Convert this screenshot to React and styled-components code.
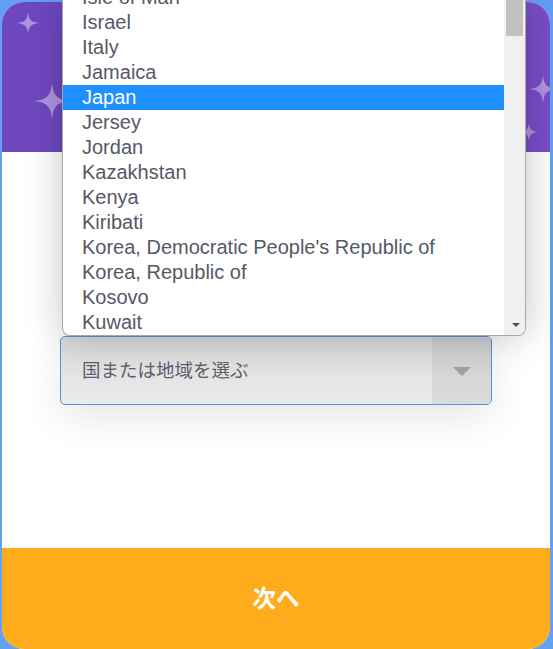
import React from "react";
import styled, { createGlobalStyle } from "styled-components";

const Global = createGlobalStyle`
  html, body { margin: 0; padding: 0; }
  body { background: #62a0f4; overflow: hidden; }
  * { box-sizing: border-box; }
`;

const Page = styled.div`
  position: relative;
  width: 553px;
  height: 649px;
  padding: 2px 3px 0 2px;
`;

const Card = styled.div`
  width: 548px;
  height: 647px;
  border-radius: 22px;
  overflow: hidden;
  background: #fff;
  display: flex;
  flex-direction: column;
`;

const Header = styled.div`
  position: relative;
  height: 150px;
  flex: none;
  background: linear-gradient(90deg, #6e47bf 0%, #7a4dc9 100%);
`;

const Sparkle = styled.svg`
  position: absolute;
  left: ${(p) => p.$x}px;
  top: ${(p) => p.$y}px;
  width: ${(p) => p.$s}px;
  height: ${(p) => p.$s}px;
  fill: #ad95de;
`;

const Body = styled.div`
  flex: 1;
  padding: 184px 58px 0;
`;

const SelectBox = styled.div`
  width: 432px;
  height: 69px;
  border: 1px solid #5590e6;
  border-radius: 5px;
  display: flex;
  overflow: hidden;
  background: linear-gradient(180deg, #d9d9d9 0%, #ececec 100%);
  box-shadow: 0 12px 40px rgba(0, 0, 0, 0.1);
`;

const SelectLabel = styled.div`
  flex: 1;
  display: flex;
  align-items: center;
  padding-left: 21px;
  padding-bottom: 4px;
  font-family: "Noto Sans CJK JP", "Noto Sans", sans-serif;
  font-size: 18.5px;
  color: #5c606c;
`;

const SelectArrow = styled.div`
  width: 59px;
  display: flex;
  align-items: center;
  justify-content: center;
  background: linear-gradient(180deg, #cdcdcd 0%, #dcdcdc 100%);
  &::after {
    content: "";
    width: 0;
    height: 0;
    border-left: 9px solid transparent;
    border-right: 9px solid transparent;
    border-top: 9px solid #a0a0a0;
    margin-top: 2px;
  }
`;

const NextButton = styled.button`
  height: 101px;
  flex: none;
  border: none;
  background: #ffac1c;
  color: #fff;
  font-family: "Noto Sans CJK JP", "Noto Sans", sans-serif;
  font-weight: 700;
  font-size: 23.5px;
  display: flex;
  align-items: center;
  justify-content: center;
  padding: 0 0 4px;
`;

const Dropdown = styled.div`
  position: absolute;
  left: 62px;
  top: 0;
  width: 464px;
  height: 336px;
  background: #fff;
  border: 1px solid #a8a8a8;
  border-top: none;
  border-radius: 0 0 8px 8px;
  overflow: hidden;
  display: flex;
  box-shadow: 0 0 38px rgba(0, 0, 0, 0.24);
`;

const List = styled.ul`
  flex: 1;
  margin: 0;
  padding: 0;
  list-style: none;
  margin-top: -15px;
`;

const Item = styled.li`
  height: 25px;
  line-height: 25px;
  padding-left: 19px;
  font-family: "Liberation Sans", Arial, sans-serif;
  font-size: 20px;
  white-space: nowrap;
  color: ${(p) => (p.$active ? "#ffffff" : "#555966")};
  background: ${(p) => (p.$active ? "#1e90ff" : "transparent")};
`;

const Scrollbar = styled.div`
  width: 21px;
  flex: none;
  background: #f0f0f0;
  display: flex;
  flex-direction: column;
  justify-content: space-between;
  align-items: center;
  padding-bottom: 8px;
`;

const Thumb = styled.div`
  width: 17px;
  height: 36px;
  background: #c1c1c1;
`;

const ScrollArrow = styled.div`
  width: 0;
  height: 0;
  border-left: 4px solid transparent;
  border-right: 4px solid transparent;
  border-top: 4px solid #505050;
  margin-left: 2px;
`;

const countries = [
  "Isle of Man",
  "Israel",
  "Italy",
  "Jamaica",
  "Japan",
  "Jersey",
  "Jordan",
  "Kazakhstan",
  "Kenya",
  "Kiribati",
  "Korea, Democratic People's Republic of",
  "Korea, Republic of",
  "Kosovo",
  "Kuwait",
];

const StarPath = "M50 0 C54 36 64 46 100 50 C64 54 54 64 50 100 C46 64 36 54 0 50 C36 46 46 36 50 0 Z";

const Star = ({ x, y, s }) => (
  <Sparkle $x={x} $y={y} $s={s} viewBox="0 0 100 100">
    <path d={StarPath} />
  </Sparkle>
);

export default function App() {
  return (
    <>
      <Global />
      <Page>
        <Card>
          <Header>
            <Star x={15} y={10} s={22} />
            <Star x={32} y={81} s={36} />
            <Star x={527} y={73} s={28} />
            <Star x={518} y={121} s={18} />
          </Header>
          <Body>
            <SelectBox>
              <SelectLabel>国または地域を選ぶ</SelectLabel>
              <SelectArrow />
            </SelectBox>
          </Body>
          <NextButton>次へ</NextButton>
        </Card>
        <Dropdown>
          <List>
            {countries.map((c) => (
              <Item key={c} $active={c === "Japan"}>
                {c}
              </Item>
            ))}
          </List>
          <Scrollbar>
            <Thumb />
            <ScrollArrow />
          </Scrollbar>
        </Dropdown>
      </Page>
    </>
  );
}
